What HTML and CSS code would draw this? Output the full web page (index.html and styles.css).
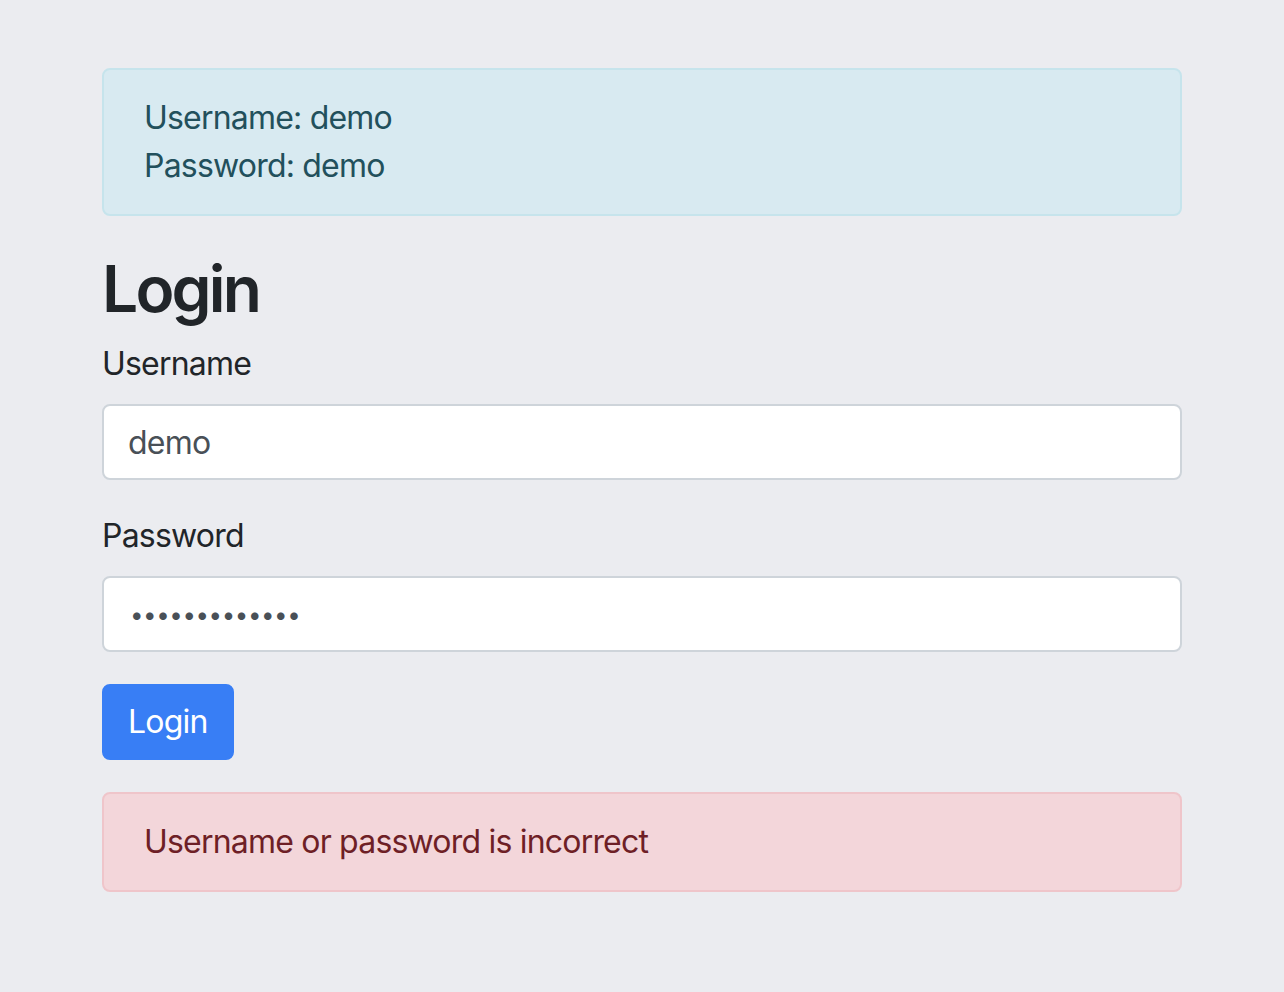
FILE: index.html
```html
<!DOCTYPE html>
<html lang="en">
<head>
<meta charset="utf-8">
<title>Login</title>
<link rel="stylesheet" href="styles.css">
</head>
<body>
<main class="container">
  <div class="alert alert-info">
    <div>Username: demo</div>
    <div>Password: demo</div>
  </div>
  <h1 class="title">Login</h1>
  <form class="form" onsubmit="return false;">
    <div class="form-group">
      <label class="label" for="username">Username</label>
      <input class="input" id="username" type="text" value="demo">
    </div>
    <div class="form-group">
      <label class="label" for="password">Password</label>
      <input class="input input-password" id="password" type="password" value="demodemodemo1">
    </div>
    <button class="btn" type="submit">Login</button>
  </form>
  <div class="alert alert-danger">Username or password is incorrect</div>
</main>
</body>
</html>
```
FILE: styles.css
```css
html, body {
  margin: 0;
  padding: 0;
}
body {
  background: #ebecf0;
  font-family: Inter, "Noto Sans", "Liberation Sans", sans-serif;
  font-size: 32px;
  line-height: 48px;
  letter-spacing: -0.8px;
  color: #212529;
}
.container {
  width: 1080px;
  box-sizing: border-box;
  padding-top: 68px;
  margin-left: 102px;
}
.alert {
  border: 2px solid transparent;
  border-radius: 8px;
  padding: 24px 40px;
  margin-bottom: 32px;
}
.alert-info {
  background: #d8eaf1;
  border-color: #c6e4ec;
  color: #22505c;
}
.alert-danger {
  background: #f3d6da;
  border-color: #efc5ca;
  color: #6e1f26;
  margin-top: 32px;
}
.title {
  margin: 0 0 13px;
  padding-top: 3px;
  font-size: 64px;
  line-height: 76px;
  font-weight: 600;
  letter-spacing: -2.8px;
}
.form-group {
  margin-bottom: 32px;
}
.label {
  display: block;
  margin-bottom: 16px;
}
.input {
  display: block;
  width: 100%;
  box-sizing: border-box;
  height: 76px;
  padding: 12px 24px;
  font-family: inherit;
  font-size: 32px;
  line-height: 48px;
  letter-spacing: -0.8px;
  color: #495057;
  background: #fff;
  border: 2px solid #ced4da;
  border-radius: 8px;
  outline: none;
}
.input-password {
  font-size: 24px;
  letter-spacing: -0.4px;
  padding-left: 26px;
}
.btn {
  display: block;
  height: 76px;
  padding: 12px 24px;
  font-family: inherit;
  font-size: 32px;
  line-height: 48px;
  letter-spacing: -0.8px;
  color: #fff;
  background: #387ef5;
  border: 2px solid #387ef5;
  border-radius: 8px;
  cursor: pointer;
}
```
